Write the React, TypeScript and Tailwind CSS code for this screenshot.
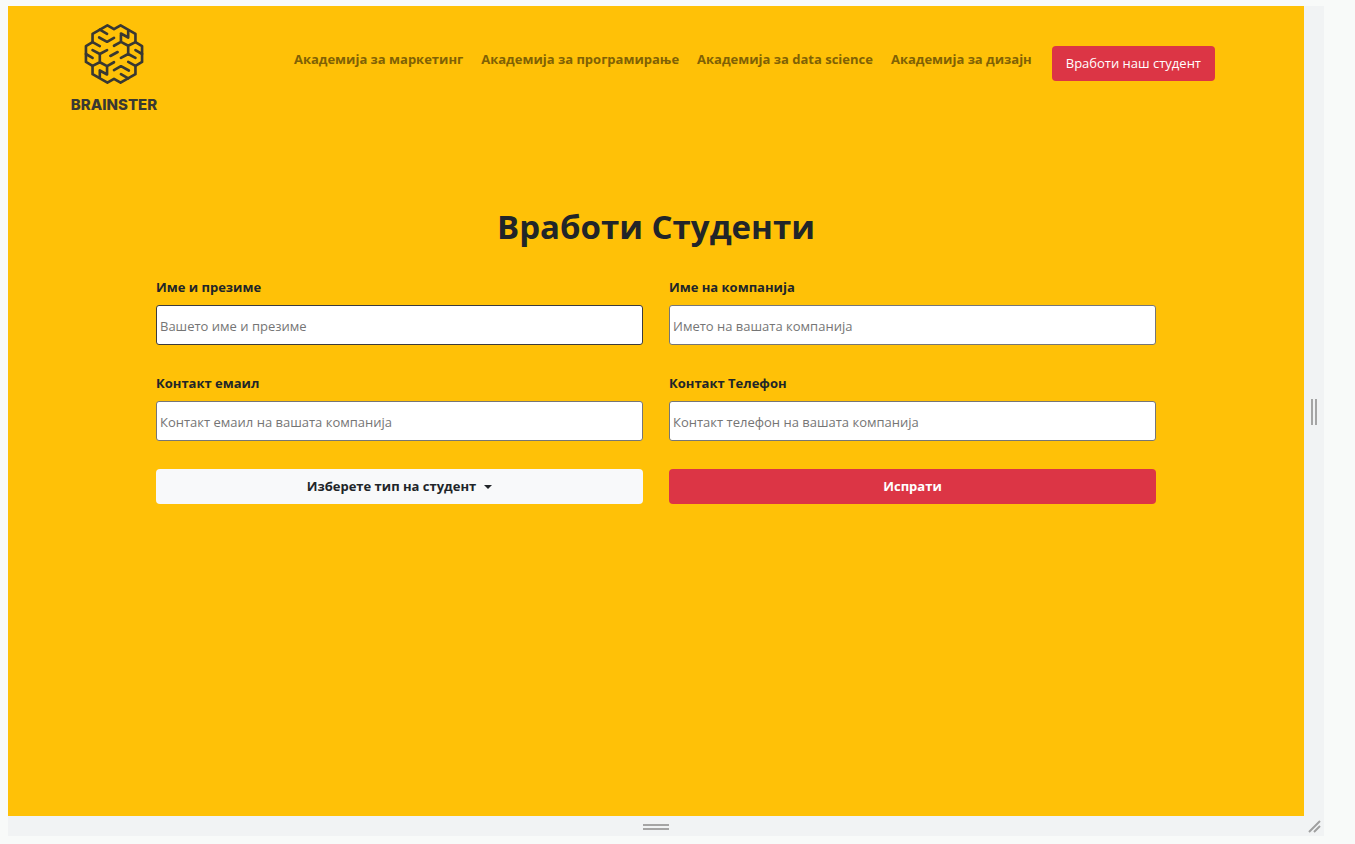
import React from "react";

const links = [
  "Академија за маркетинг",
  "Академија за програмирање",
  "Академија за data science",
  "Академија за дизајн",
];

const fields = [
  { id: "name", label: "Име и презиме", hint: "Вашето име и презиме", type: "text", border: "border-[#3c3c3c]" },
  { id: "company", label: "Име на компанија", hint: "Името на вашата компанија", type: "text", border: "border-[#767676]" },
  { id: "email", label: "Контакт емаил", hint: "Контакт емаил на вашата компанија", type: "email", border: "border-[#767676]" },
  { id: "phone", label: "Контакт Телефон", hint: "Контакт телефон на вашата компанија", type: "tel", border: "border-[#767676]" },
];

function Logo() {
  return (
    <a href="#" aria-label="Brainster" className="flex w-[88px] flex-col items-center text-[#393832]">
      <svg viewBox="0 0 206 204" className="h-[68px] w-[68px]" fill="none" stroke="currentColor" strokeWidth="8" strokeLinecap="round" strokeLinejoin="round">
        <path d="M83 15 103 27 123 15 168 41V66L188 78V126L168 138V163L123 189 103 177 83 189 38 163V138L18 126V78L38 66V41Z" />
        <path d="M60 28 82 41M58 52 82 65 103 53M38 66 60 78M124 40V65L103 77M124 40 146 52V32M124 65 146 77V102L168 114M146 77 168 66M146 102 124 114M188 102 168 90" />
        <path d="M146 176 124 163M148 152 124 139 103 151M168 138 146 126M82 164V139L103 127M82 164 60 152V172M82 139 60 127V102L38 90M60 127 38 138M60 102 82 90M18 102 38 114M92 108 114 96" />
      </svg>
      <span className="mt-2 text-[15px] leading-[18px] font-extrabold font-[Inter,sans-serif]">BRAINSTER</span>
    </a>
  );
}

export default function App() {
  return (
    <div className="flex h-screen flex-col bg-[#f8faf9] pt-[6px] pr-[31px] pb-2 pl-2 font-['Open_Sans',sans-serif] text-[13px] text-[#212529]">
      <div className="flex min-h-0 flex-1">
        <main className="min-w-0 flex-1 overflow-auto bg-[#ffc107]">
          <header className="flex items-start justify-between pt-[14px] pr-[89px] pl-[62px]">
            <Logo />
            <div className="flex items-start pt-[26px]">
              <nav className="flex gap-[18px] pt-[3px] pr-[20px]">
                {links.map((text) => (
                  <a key={text} href="#" className="leading-5 font-bold whitespace-nowrap text-[#806105]">
                    {text}
                  </a>
                ))}
              </nav>
              <button type="button" className="h-[35px] rounded bg-[#dc3545] px-[14px] whitespace-nowrap text-white">
                Вработи наш студент
              </button>
            </div>
          </header>
          <form className="px-[148px] pt-[91px]">
            <h1 className="text-center text-[33px] leading-[44px] font-bold">Вработи Студенти</h1>
            <div className="mt-7 grid grid-cols-2 gap-x-[26px] gap-y-7">
              {fields.map((f) => (
                <div key={f.id}>
                  <label htmlFor={f.id} className="mb-[7px] block leading-[21px] font-bold">{f.label}</label>
                  <input id={f.id} type={f.type} placeholder={f.hint} className={`block h-10 w-full rounded-[3px] border bg-white px-[3px] pt-[2px] placeholder:text-[#757575] ${f.border}`} />
                </div>
              ))}
              <button type="button" className="flex h-[35px] items-center justify-center gap-2 rounded bg-[#f8f9fa] font-bold">
                Изберете тип на студент
                <span className="border-x-4 border-t-4 border-x-transparent border-t-current" />
              </button>
              <button type="submit" className="h-[35px] rounded bg-[#dc3545] font-bold text-white">Испрати</button>
            </div>
          </form>
        </main>
        <div className="flex w-5 items-center justify-center gap-[2px] bg-[#f1f3f4] pt-[2px]">
          <span className="h-[26px] w-[2px] bg-[#a5a5a5]" />
          <span className="h-[26px] w-[2px] bg-[#a5a5a5]" />
        </div>
      </div>
      <div className="flex h-5 bg-[#f1f3f4]">
        <div className="flex flex-1 flex-col items-center justify-center gap-[2px] pt-[2px]">
          <span className="h-[2px] w-[26px] bg-[#a5a5a5]" />
          <span className="h-[2px] w-[26px] bg-[#a5a5a5]" />
        </div>
        <svg viewBox="0 0 20 20" className="size-5" stroke="#a0a0a0" strokeWidth="2">
          <path d="M5 16 16 5M10 16 16 10" />
        </svg>
      </div>
    </div>
  );
}
